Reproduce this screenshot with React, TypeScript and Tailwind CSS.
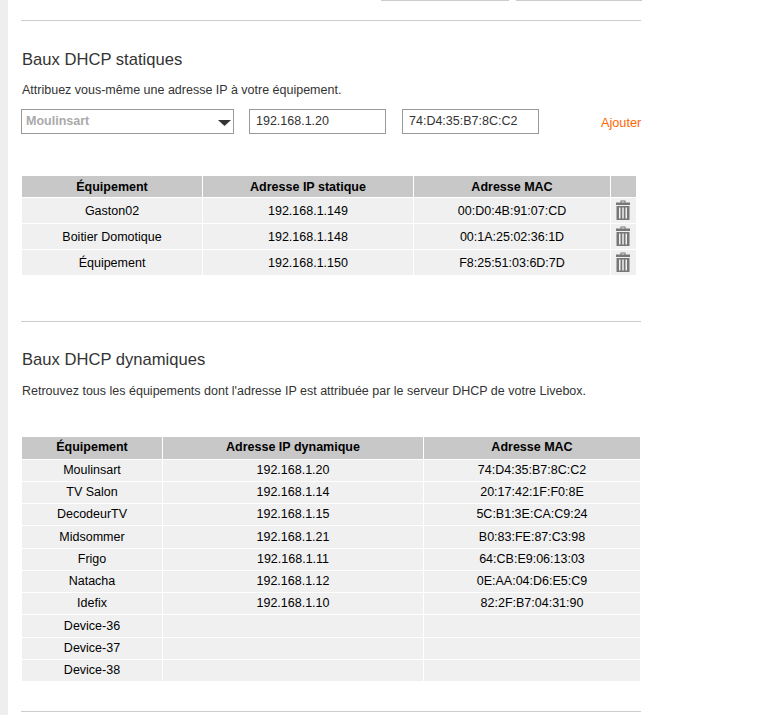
const staticRows = [
  ["Gaston02", "192.168.1.149", "00:D0:4B:91:07:CD"],
  ["Boitier Domotique", "192.168.1.148", "00:1A:25:02:36:1D"],
  ["Équipement", "192.168.1.150", "F8:25:51:03:6D:7D"],
];

const dynamicRows = [
  ["Moulinsart", "192.168.1.20", "74:D4:35:B7:8C:C2"],
  ["TV Salon", "192.168.1.14", "20:17:42:1F:F0:8E"],
  ["DecodeurTV", "192.168.1.15", "5C:B1:3E:CA:C9:24"],
  ["Midsommer", "192.168.1.21", "B0:83:FE:87:C3:98"],
  ["Frigo", "192.168.1.11", "64:CB:E9:06:13:03"],
  ["Natacha", "192.168.1.12", "0E:AA:04:D6:E5:C9"],
  ["Idefix", "192.168.1.10", "82:2F:B7:04:31:90"],
  ["Device-36", "", ""],
  ["Device-37", "", ""],
  ["Device-38", "", ""],
];

function Trash() {
  return (
    <svg width="16" height="20" viewBox="0 0 16 20" fill="#777">
      <path d="M5.5 0.5h5v2h4.5v2.500h-14v-2.500h4.500zM6.500 1.500v1h3v-1z" fillRule="evenodd" />
      <path d="M1.500 6h13v14h-13zM4 7.500v11h1.500v-11zM7.250 7.500v11h1.500v-11zM10.500 7.500v11h1.500v-11z" fillRule="evenodd" />
    </svg>
  );
}

export default function App() {
  return (
    <div className="flex w-[765px] h-[715px] overflow-hidden bg-white font-['Liberation_Sans',Arial,sans-serif] text-[12.5px] text-black">
      <div className="w-2 shrink-0 bg-[#eeeeee]" />
      <div className="pl-[13px] w-[640px]">
        {/* bottom edges of the buttons above the fold */}
        <div className="flex h-px pl-[360px] gap-[7px]">
          <div className="w-[128px] bg-[#cccccc]" />
          <div className="w-[126px] bg-[#cccccc]" />
        </div>
        <div className="mt-[19px] h-px w-[620px] bg-[#cccccc]" />

        <h2 className="mt-[29px] pl-px text-[16.6px] leading-[20px] text-[#333333]">Baux DHCP statiques</h2>
        <p className="mt-[10px] pl-px leading-[20px] text-[#333333]">Attribuez vous-même une adresse IP à votre équipement.</p>

        <div className="mt-[9px] flex items-start">
          <div className="flex items-center justify-between w-[213px] h-[25px] border border-[#999999] pl-[4px] pr-[1px]">
            <span className="font-bold text-[#aaaaaa]">Moulinsart</span>
            <svg width="16" height="8" viewBox="0 0 16 8" className="mt-[2px] mr-[-1px]">
              <path d="M1 1h13l-6.500 6z" fill="#333333" />
            </svg>
          </div>
          <input readOnly value="192.168.1.20" className="ml-[15px] w-[137px] h-[25px] border border-[#999999] px-[6px] pb-px text-[12.5px] text-[#333333] outline-none" />
          <input readOnly value="74:D4:35:B7:8C:C2" className="ml-[16px] w-[137px] h-[25px] border border-[#999999] px-[6px] pb-px text-[12.5px] text-[#333333] outline-none" />
          <a className="ml-[62px] mt-[4px] leading-[20px] text-[12.7px] text-[#ff6600]">Ajouter</a>
        </div>

        <div className="mt-[42px] ml-px w-[614px]">
          <div className="grid grid-cols-[180px_210px_196px_25px] gap-x-px h-[21px]">
            {["Équipement", "Adresse IP statique", "Adresse MAC", ""].map((h, i) => (
              <div key={i} className="bg-[#c8c8c8] flex items-center justify-center pt-px font-bold">{h}</div>
            ))}
          </div>
          {staticRows.map((r) => (
            <div key={r[1]} className="grid grid-cols-[180px_210px_196px_25px] gap-x-px h-[25px] mt-px">
              {r.map((c) => (
                <div key={c} className="bg-[#f0f0f0] flex items-center justify-center pt-px">{c}</div>
              ))}
              <div className="bg-[#f0f0f0] flex items-center justify-center pr-[2px] pb-[2px]"><Trash /></div>
            </div>
          ))}
        </div>

        <div className="mt-[46px] h-px w-[620px] bg-[#cccccc]" />

        <h2 className="mt-[28px] pl-px text-[16.6px] leading-[20px] text-[#333333]">Baux DHCP dynamiques</h2>
        <p className="mt-[11px] pl-px leading-[20px] text-[#333333]">Retrouvez tous les équipements dont l'adresse IP est attribuée par le serveur DHCP de votre Livebox.</p>

        <div className="mt-[36px] ml-px w-[618px]">
          <div className="grid grid-cols-[140px_260px_216px] gap-x-px h-[21.6px]">
            {["Équipement", "Adresse IP dynamique", "Adresse MAC"].map((h) => (
              <div key={h} className="bg-[#c8c8c8] flex items-center justify-center font-bold">{h}</div>
            ))}
          </div>
          {dynamicRows.map((r) => (
            <div key={r[0]} className="grid grid-cols-[140px_260px_216px] gap-x-px h-[21.25px] mt-px">
              {r.map((c, i) => (
                <div key={i} className="bg-[#f0f0f0] flex items-center justify-center">{c}</div>
              ))}
            </div>
          ))}
        </div>

        <div className="mt-[30px] h-px w-[620px] bg-[#cccccc]" />
      </div>
    </div>
  );
}
